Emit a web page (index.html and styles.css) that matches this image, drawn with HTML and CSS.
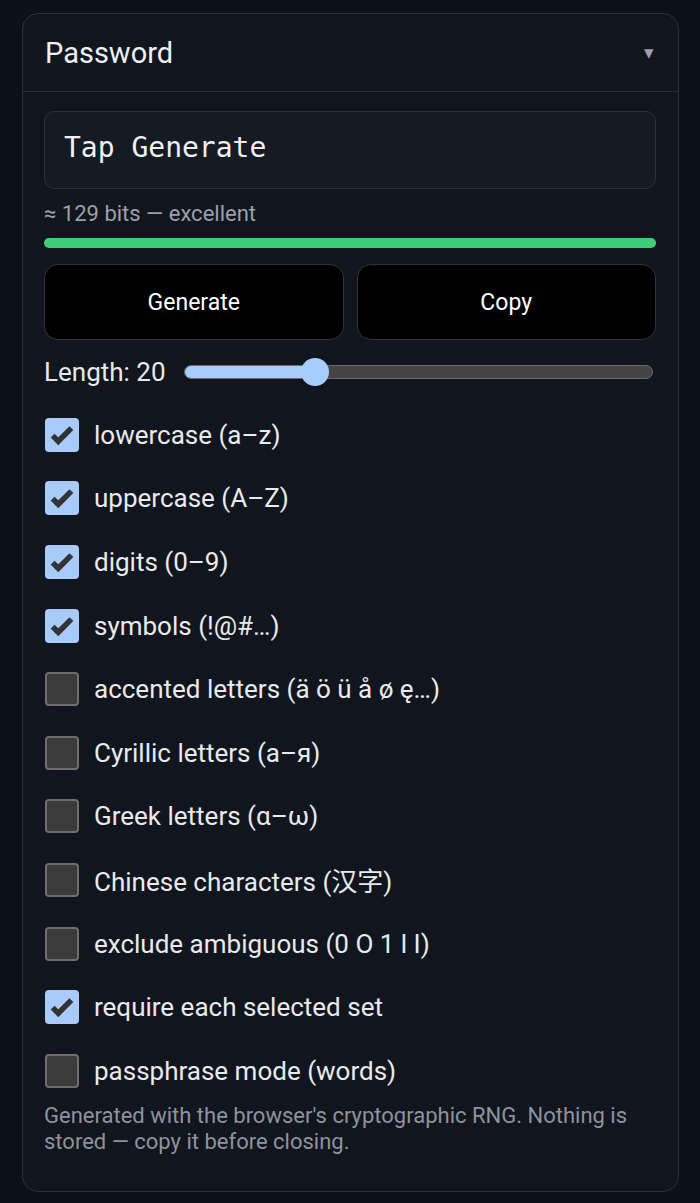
FILE: index.html
```html
<!DOCTYPE html>
<html lang="en">
<head>
    <meta charset="UTF-8">
    <meta name="viewport" content="width=device-width, initial-scale=1.0">
    <title>Password Generator</title>
    <link rel="stylesheet" href="styles.css">
</head>
<body>
    <div class="card">
        <div class="card-head">
            <h2>Password</h2>
            <span class="caret">▾</span>
        </div>

        <div class="card-body">
            <div class="output">Tap Generate</div>
            <div class="entropy">≈ 129 bits — excellent</div>
            <div class="meter"><div class="meter-fill" style="width: 100%"></div></div>

            <div class="actions">
                <button>Generate</button>
                <button>Copy</button>
            </div>

            <div class="length-row">
                <span>Length: 20</span>
                <div class="slider">
                    <div class="slider-fill" style="width: 28%"></div>
                    <div class="slider-thumb" style="left: 28%"></div>
                </div>
            </div>

            <div class="options">
                <label class="opt"><span class="box on"><svg viewBox="0 0 24 24"><path d="M4.5 12.5l4.5 4.5L19.5 6.5"/></svg></span>lowercase (a–z)</label>
                <label class="opt"><span class="box on"><svg viewBox="0 0 24 24"><path d="M4.5 12.5l4.5 4.5L19.5 6.5"/></svg></span>uppercase (A–Z)</label>
                <label class="opt"><span class="box on"><svg viewBox="0 0 24 24"><path d="M4.5 12.5l4.5 4.5L19.5 6.5"/></svg></span>digits (0–9)</label>
                <label class="opt"><span class="box on"><svg viewBox="0 0 24 24"><path d="M4.5 12.5l4.5 4.5L19.5 6.5"/></svg></span>symbols (!@#…)</label>
                <label class="opt"><span class="box"></span>accented letters (ä ö ü å ø ę…)</label>
                <label class="opt"><span class="box"></span>Cyrillic letters (а–я)</label>
                <label class="opt"><span class="box"></span>Greek letters (α–ω)</label>
                <label class="opt"><span class="box"></span>Chinese characters (汉字)</label>
                <label class="opt"><span class="box"></span>exclude ambiguous (0 O 1 l I)</label>
                <label class="opt"><span class="box on"><svg viewBox="0 0 24 24"><path d="M4.5 12.5l4.5 4.5L19.5 6.5"/></svg></span>require each selected set</label>
                <label class="opt"><span class="box"></span>passphrase mode (words)</label>
            </div>

            <p class="note">Generated with the browser's cryptographic RNG. Nothing is stored — copy it before closing.</p>
        </div>
    </div>
</body>
</html>
```

FILE: styles.css
```css
body {
    margin: 0;
    background: #0c1018;
    font-family: Roboto, "Noto Sans CJK SC", sans-serif;
    color: #e8eaed;
}

.card {
    margin: 13px 21px 12px 22px;
    background: #11151e;
    border: 1px solid #2b303b;
    border-radius: 16px;
}

.card-head {
    display: flex;
    align-items: center;
    justify-content: space-between;
    height: 77px;
    padding: 0 24px 0 22px;
    border-bottom: 1px solid #2b303b;
}

.card-head h2 {
    margin: 0;
    font-size: 29px;
    font-weight: 400;
    color: #eef0f3;
}

.caret {
    font-size: 19px;
    color: #9aa0aa;
}

.card-body {
    padding: 19px 22px 36px 21px;
}

.output {
    height: 78px;
    box-sizing: border-box;
    display: flex;
    align-items: center;
    padding: 0 0 6px 19px;
    background: #161a23;
    border: 1px solid #2b303b;
    border-radius: 10px;
    font-family: "DejaVu Sans Mono", monospace;
    font-size: 28px;
    color: #eef0f3;
}

.entropy {
    margin-top: 13px;
    font-size: 22px;
    line-height: 24px;
    color: #9aa0aa;
}

.meter {
    margin-top: 12px;
    height: 10px;
    border-radius: 5px;
    background: #2b303b;
}

.meter-fill {
    height: 100%;
    border-radius: 5px;
    background: #3ecf76;
}

.actions {
    display: grid;
    grid-template-columns: 1fr 1fr;
    gap: 13px;
    margin-top: 16px;
}

.actions button {
    height: 76px;
    background: #000;
    border: 1px solid #2e333d;
    border-radius: 14px;
    color: #fff;
    font-family: Roboto, sans-serif;
    font-size: 23px;
}

.length-row {
    display: flex;
    align-items: center;
    gap: 18px;
    height: 34px;
    margin-top: 15px;
    font-size: 26px;
}

.slider {
    position: relative;
    flex: 1;
    height: 12px;
    margin-right: 3px;
    background: #444;
    border: 1px solid #6a6a6a;
    border-radius: 7px;
}

.slider-fill {
    height: 100%;
    background: #a6cdfc;
    border-radius: 7px 0 0 7px;
}

.slider-thumb {
    position: absolute;
    top: 50%;
    width: 28px;
    height: 28px;
    margin-left: -14px;
    transform: translateY(-50%);
    background: #a6cdfc;
    border-radius: 50%;
}

.options {
    display: flex;
    flex-direction: column;
    margin-top: 14px;
}

.opt {
    display: flex;
    align-items: center;
    gap: 15px;
    height: 63.6px;
    font-size: 26px;
}

.box {
    width: 34px;
    height: 34px;
    flex: none;
    box-sizing: border-box;
    display: flex;
    align-items: center;
    justify-content: center;
    border-radius: 4px;
    background: #3b3b3b;
    border: 2px solid #6d6d6d;
    margin-left: 1px;
}

.box.on {
    background: #a8cbfa;
    border-color: #a8cbfa;
}

.box svg {
    width: 30px;
    height: 30px;
    fill: none;
    stroke: #333;
    stroke-width: 4.4;
}

.note {
    margin: 0;
    font-size: 22px;
    line-height: 26px;
    color: #8d939d;
}
```
